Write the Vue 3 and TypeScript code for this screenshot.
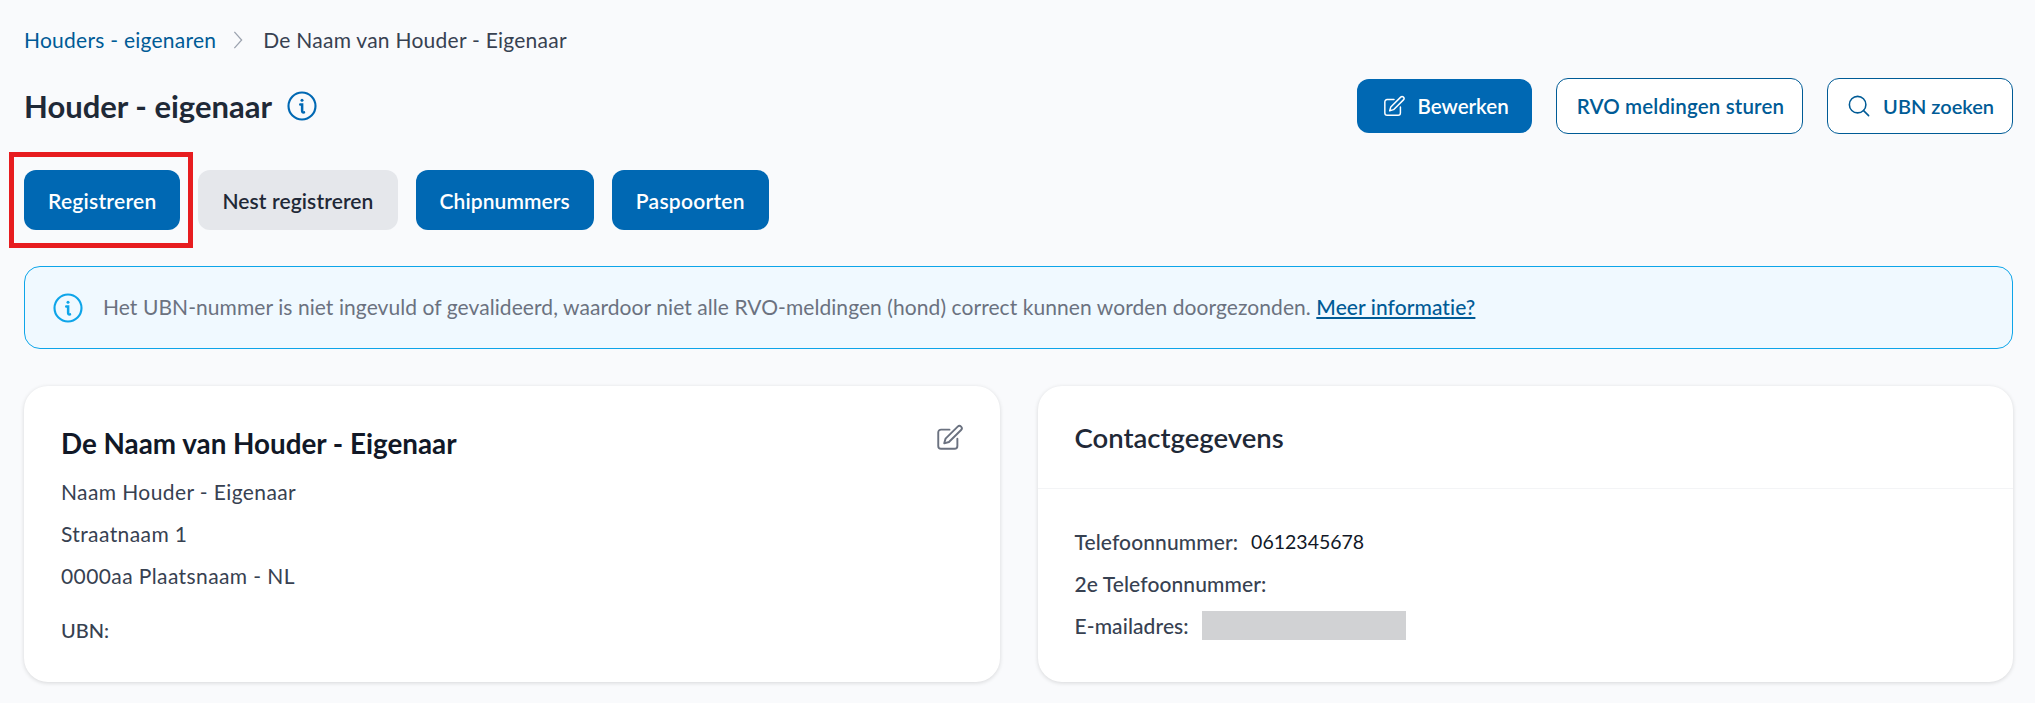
<template>
  <div class="page">
    <nav class="crumbs">
      <a class="crumb-link">Houders - eigenaren</a>
      <svg class="crumb-sep" viewBox="0 0 12 22" fill="none" stroke="currentColor" stroke-width="1.4">
        <path d="M2 2l8 9-8 9" />
      </svg>
      <span>De Naam van Houder - Eigenaar</span>
    </nav>

    <header class="head">
      <div class="title-wrap">
        <h1>Houder - eigenaar</h1>
        <svg class="info-icon" viewBox="0 0 24 24" fill="none" stroke="currentColor" stroke-width="1.7">
          <circle cx="12" cy="12" r="10.8" />
          <path d="M10.600 10.800h1.500v5.200c0 1 .5 1.300 1.500 1.100" stroke-width="2" stroke-linecap="round" />
          <circle cx="12" cy="7.300" r="1.200" fill="currentColor" stroke="none" />
        </svg>
      </div>
      <div class="head-actions">
        <button class="btn solid small">
          <svg class="btn-icon" viewBox="0 0 24 24" fill="none" stroke="currentColor" stroke-width="1.600" stroke-linecap="round" stroke-linejoin="round">
            <path d="M12 5H4.500A2.500 2.500 0 0 0 2 7.500v12A2.500 2.500 0 0 0 4.500 22h12a2.500 2.500 0 0 0 2.500-2.500V13" />
            <path d="M19.300 2.300a2.100 2.100 0 0 1 3 3L11.500 16l-4.200 1.200 1.200-4.200z" />
          </svg>
          Bewerken
        </button>
        <button class="btn outline">RVO meldingen sturen</button>
        <button class="btn outline narrow">
          <svg class="btn-icon" viewBox="0 0 24 24" fill="none" stroke="currentColor" stroke-width="1.700" stroke-linecap="round">
            <circle cx="10.500" cy="10.500" r="9" />
            <path d="M17 17l5.500 5.500" />
          </svg>
          UBN zoeken
        </button>
      </div>
    </header>

    <div class="actions">
      <div class="marked">
        <button class="btn solid">Registreren</button>
        <span class="marker"></span>
      </div>
      <button class="btn muted tight">Nest registreren</button>
      <button class="btn solid tight">Chipnummers</button>
      <button class="btn solid">Paspoorten</button>
    </div>

    <div class="alert">
      <svg class="alert-icon" viewBox="0 0 24 24" fill="none" stroke="currentColor" stroke-width="1.7">
        <circle cx="12" cy="12" r="10.800" />
        <path d="M10.600 10.800h1.500v5.200c0 1 .5 1.300 1.500 1.100" stroke-width="2" stroke-linecap="round" />
        <circle cx="12" cy="7.300" r="1.200" fill="currentColor" stroke="none" />
      </svg>
      <p>
        Het UBN-nummer is niet ingevuld of gevalideerd, waardoor niet alle RVO-meldingen (hond) correct kunnen worden doorgezonden.
        <a>Meer informatie?</a>
      </p>
    </div>

    <section class="cards">
      <article class="card owner">
        <div class="owner-top">
          <h2>De Naam van Houder - Eigenaar</h2>
          <svg class="edit-icon" viewBox="0 0 24 24" fill="none" stroke="currentColor" stroke-width="1.700" stroke-linecap="round" stroke-linejoin="round">
            <path d="M12 5H4.500A2.500 2.500 0 0 0 2 7.500v12A2.500 2.500 0 0 0 4.500 22h12a2.500 2.500 0 0 0 2.500-2.500V13" />
            <path d="M19.300 2.300a2.100 2.100 0 0 1 3 3L11.500 16l-4.200 1.200 1.200-4.200z" />
          </svg>
        </div>
        <p v-for="line in addressLines" :key="line" class="line">{{ line }}</p>
        <p class="line ubn">UBN:</p>
      </article>

      <article class="card contact">
        <h3>Contactgegevens</h3>
        <div class="contact-body">
          <div class="row">
            <span class="label">Telefoonnummer:</span>
            <span class="value">0612345678</span>
          </div>
          <div class="row">
            <span class="label">2e Telefoonnummer:</span>
          </div>
          <div class="row">
            <span class="label">E-mailadres:</span>
            <span class="redacted"></span>
          </div>
        </div>
      </article>
    </section>
  </div>
</template>

<script setup lang="ts">
const addressLines: string[] = [
  'Naam Houder - Eigenaar',
  'Straatnaam 1',
  '0000aa Plaatsnaam - NL',
]
</script>

<style>
html,
body {
  margin: 0;
  background: #f9fafc;
}
</style>

<style scoped>
.page {
  width: 2035px;
  height: 703px;
  box-sizing: border-box;
  padding: 27px 22px 0 24px;
  overflow: hidden;
  font-family: Lato, "Noto Sans", sans-serif;
  font-size: 21px;
  color: #374151;
  background: #f9fafc;
}

.crumbs {
  display: flex;
  align-items: center;
  height: 24px;
  letter-spacing: 0.25px;
}

.crumb-link {
  color: #005b96;
}

.crumb-sep {
  width: 12px;
  height: 20px;
  margin: 2px 19px 0 16px;
  color: #9ca3af;
}

.head {
  display: flex;
  align-items: center;
  justify-content: space-between;
  height: 56px;
  margin-top: 27px;
}

.title-wrap {
  display: flex;
  align-items: center;
  gap: 15px;
}

h1 {
  margin: 0;
  font-size: 31px;
  font-weight: 700;
  color: #1f2937;
}

.info-icon {
  width: 30px;
  height: 30px;
  color: #0068b3;
}

.head-actions {
  display: flex;
  align-items: center;
  gap: 24px;
}

.btn {
  display: inline-flex;
  align-items: center;
  justify-content: center;
  height: 60px;
  padding: 0 24px;
  border: none;
  border-radius: 12px;
  font-family: inherit;
  font-size: 21px;
  font-weight: 600;
  letter-spacing: 0.25px;
  white-space: nowrap;
  box-sizing: border-box;
}

.btn.tight {
  letter-spacing: 0.1px;
}

.btn.small {
  height: 54px;
  padding: 0 23px 0 26px;
  font-size: 20.500px;
  letter-spacing: 0;
}

.btn.solid {
  background: #0068b3;
  color: #fff;
}

.btn.muted {
  background: #e5e7eb;
  color: #1f2937;
}

.btn.outline {
  height: 56px;
  padding: 0 18px 0 20px;
  background: #fff;
  border: 1px solid #005b96;
  color: #005b96;
  font-size: 20.500px;
  letter-spacing: 0.15px;
}

.btn.outline.narrow {
  font-size: 20px;
  letter-spacing: 0;
}

.btn-icon {
  width: 22px;
  height: 22px;
  margin-right: 13px;
}

.actions {
  display: flex;
  gap: 18px;
  margin-top: 36px;
}

.marked {
  position: relative;
  display: flex;
}

.marker {
  position: absolute;
  inset: -18px -13px -18px -15px;
  border: 5px solid #e71c1f;
  pointer-events: none;
}

.alert {
  display: flex;
  align-items: center;
  gap: 20px;
  height: 83px;
  margin-top: 36px;
  padding: 0 28px;
  box-sizing: border-box;
  background: #f0f9ff;
  border: 1px solid #0ea5e9;
  border-radius: 16px;
}

.alert-icon {
  flex: none;
  width: 30px;
  height: 30px;
  color: #0ea5e9;
}

.alert p {
  margin: -3px 0 0;
  color: #6b7280;
  letter-spacing: 0.07px;
}

.alert a {
  color: #005b96;
  font-weight: 500;
  text-decoration: underline;
}

.cards {
  display: grid;
  grid-template-columns: 1fr 1fr;
  gap: 38px;
  margin-top: 37px;
}

.card {
  height: 296px;
  box-sizing: border-box;
  background: #fff;
  border-radius: 24px;
  box-shadow: 0 1px 4px rgba(0, 0, 0, 0.14);
}

.owner {
  padding: 38px 37px 0;
}

.owner-top {
  display: flex;
  align-items: flex-start;
  justify-content: space-between;
  height: 47px;
}

h2 {
  margin: 3px 0 0;
  font-size: 27.800px;
  font-weight: 700;
  color: #111827;
}

.edit-icon {
  width: 27px;
  height: 27px;
  color: #6b7280;
}

.line {
  margin: 0;
  height: 42px;
  line-height: 42px;
  letter-spacing: 0.4px;
}

.ubn {
  margin-top: 12px;
  font-size: 20px;
  font-weight: 500;
  letter-spacing: 0;
}

h3 {
  margin: 0;
  height: 102px;
  line-height: 104px;
  padding: 0 37px;
  font-size: 27.500px;
  font-weight: 600;
  color: #1f2937;
  border-bottom: 1px solid #f3f4f6;
}

.contact-body {
  padding: 31px 37px 0;
}

.row {
  display: flex;
  align-items: center;
  gap: 8px;
  height: 42px;
}

.label {
  font-weight: 500;
  letter-spacing: 0.1px;
}

.value {
  margin-left: 5px;
  font-size: 19.500px;
  color: #111827;
}

.redacted {
  width: 204px;
  height: 29px;
  margin-left: 5px;
  background: #d1d2d4;
}
</style>
